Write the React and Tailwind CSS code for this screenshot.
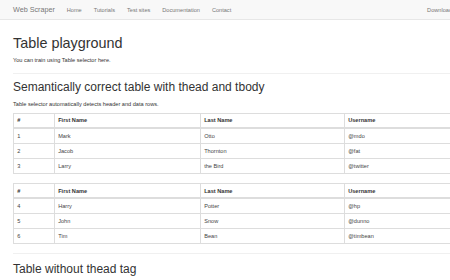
import React from 'react';

const navLinks = ['Home', 'Tutorials', 'Test sites', 'Documentation', 'Contact'];

const firstRows = [
  { id: 1, first: 'Mark', last: 'Otto', user: '@mdo' },
  { id: 2, first: 'Jacob', last: 'Thornton', user: '@fat' },
  { id: 3, first: 'Larry', last: 'the Bird', user: '@twitter' },
];

const secondRows = [
  { id: 4, first: 'Harry', last: 'Potter', user: '@hp' },
  { id: 5, first: 'John', last: 'Snow', user: '@dunno' },
  { id: 6, first: 'Tim', last: 'Bean', user: '@timbean' },
];

// bordered table, scaled-down bootstrap look
const PeopleTable = ({ rows, className = '' }) => (
  <table className={`w-[455px] table-fixed border-collapse text-[5.6px] leading-[8px] text-[#444] ${className}`}>
    <colgroup>
      <col className="w-[41px]" />
      <col className="w-[146px]" />
      <col className="w-[144px]" />
      <col />
    </colgroup>
    <thead>
      <tr>
        {['#', 'First Name', 'Last Name', 'Username'].map((h) => (
          <th
            key={h}
            className="border border-b-2 border-[#ddd] px-[3.2px] py-[2.5px] text-left font-bold text-[#333]"
          >
            {h}
          </th>
        ))}
      </tr>
    </thead>
    <tbody>
      {rows.map((row) => (
        <tr key={row.id}>
          <td className="border border-[#ddd] px-[3.2px] py-[3px]">{row.id}</td>
          <td className="border border-[#ddd] px-[3.2px] py-[3px]">{row.first}</td>
          <td className="border border-[#ddd] px-[3.2px] py-[3px]">{row.last}</td>
          <td className="border border-[#ddd] px-[3.2px] py-[3px]">{row.user}</td>
        </tr>
      ))}
    </tbody>
  </table>
);

export default function App() {
  return (
    <div className="relative h-[280px] w-[450px] overflow-hidden bg-white font-['Liberation_Sans',Arial,sans-serif] text-[#333]">
      {/* navbar */}
      <div className="h-[20px] w-[470px] border-b border-[#e7e7e7] bg-[#f8f8f8]">
        <div className="flex h-full items-center pl-[7px] pr-[12px]">
          <span className="px-[6px] text-[7.2px] leading-[8px] text-[#777]">Web Scraper</span>
          {navLinks.map((link) => (
            <span key={link} className="px-[6px] text-[5.6px] leading-[8px] text-[#777]">
              {link}
            </span>
          ))}
          <span className="ml-auto px-[6px] text-[5.6px] leading-[8px] text-[#777]">Download</span>
        </div>
      </div>

      <div className="pl-[13px]">
        <h1 className="mt-[16px] text-[14.4px] leading-[15.84px] font-normal">Table playground</h1>
        <p className="mt-[4px] text-[5.6px] leading-[8px]">You can train using Table selector here.</p>
        <hr className="mt-[9px] w-[455px] border-t border-[#f0f0f0]" />

        <h2 className="mt-[7px] text-[12px] leading-[13.2px] font-normal">
          Semantically correct table with thead and tbody
        </h2>
        <p className="mt-[5.6px] text-[5.6px] leading-[8px]">
          Table selector automatically detects header and data rows.
        </p>
        <PeopleTable rows={firstRows} className="mt-[5px]" />
        <PeopleTable rows={secondRows} className="mt-[9.5px]" />
        <hr className="mt-[8.5px] w-[455px] border-t border-[#f0f0f0]" />

        <h2 className="mt-[9px] text-[12px] leading-[13.2px] font-normal">Table without thead tag</h2>
        <p className="mt-[5.6px] text-[5.6px] leading-[8px]">
          Table selector automatically detects header and data rows.
        </p>
      </div>
    </div>
  );
}
